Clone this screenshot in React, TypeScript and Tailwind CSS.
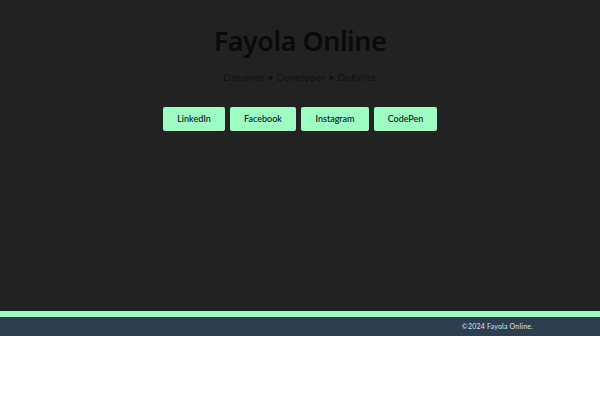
export default function App() {
  const links = [
    { label: 'LinkedIn', w: 'w-[62px]' },
    { label: 'Facebook', w: 'w-[66px]' },
    { label: 'Instagram', w: 'w-[68px]' },
    { label: 'CodePen', w: 'w-[63px]' },
  ]

  return (
    <div className="w-full bg-white" style={{ fontFamily: '"Lato", "Open Sans", sans-serif' }}>
      <header className="h-[311px] bg-[#222222] flex flex-col items-center">
        <h1
          className="mt-[24px] text-[27px] leading-[34px] text-[#0a0a0a] font-semibold tracking-[-0.5px]"
          style={{ fontFamily: '"Noto Sans", "Liberation Sans", sans-serif' }}
        >
          Fayola Online
        </h1>
        <p className="mt-[12px] text-[10px] leading-[14px] tracking-[0.4px] text-[#111111]">
          Dreamer • Developer • Definite
        </p>
        <nav className="mt-[23px] flex gap-[5px]">
          {links.map((l) => (
            <a
              key={l.label}
              href="#"
              className={`${l.w} h-[24px] flex items-center justify-center rounded-[2px] bg-[#9dfdc3] text-[9px] font-medium text-[#111111]`}
            >
              {l.label}
            </a>
          ))}
        </nav>
      </header>
      <div className="h-[6px] bg-[#9dfdc3]" />
      <footer className="h-[19px] bg-[#2c3e50] flex items-center justify-end pr-[67px]">
        <span className="text-[7px] text-[#dde3e8] tracking-[0.2px]">©2024 Fayola Online.</span>
      </footer>
    </div>
  )
}
